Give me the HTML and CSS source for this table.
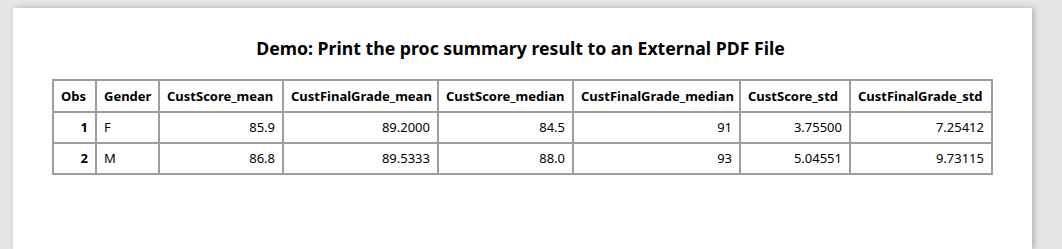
FILE: index.html
```html
<!DOCTYPE html>
<html>
<head>
<meta charset="utf-8">
<link rel="stylesheet" href="styles.css">
</head>
<body>
<div class="page">
  <h1 class="title">Demo: Print the proc summary result to an External PDF File</h1>
  <table class="data">
    <colgroup>
      <col class="c1"><col class="c2"><col class="c3"><col class="c4"><col class="c5"><col class="c6"><col class="c7"><col class="c8">
    </colgroup>
    <thead>
      <tr>
        <th class="left">Obs</th>
        <th class="left">Gender</th>
        <th class="left">CustScore_mean</th>
        <th class="left">CustFinalGrade_mean</th>
        <th class="left">CustScore_median</th>
        <th class="left">CustFinalGrade_median</th>
        <th class="left">CustScore_std</th>
        <th class="left">CustFinalGrade_std</th>
      </tr>
    </thead>
    <tbody>
      <tr>
        <th class="num">1</th><td>F</td><td class="num">85.9</td><td class="num">89.2000</td><td class="num">84.5</td><td class="num">91</td><td class="num">3.75500</td><td class="num">7.25412</td>
      </tr>
      <tr>
        <th class="num">2</th><td>M</td><td class="num">86.8</td><td class="num">89.5333</td><td class="num">88.0</td><td class="num">93</td><td class="num">5.04551</td><td class="num">9.73115</td>
      </tr>
    </tbody>
  </table>
</div>
</body>
</html>
```

FILE: styles.css
```css
html, body {
  margin: 0;
  padding: 0;
  background: #e6e6e6;
  height: 100%;
  overflow: hidden;
}
body {
  font-family: "Noto Sans", "Open Sans", sans-serif;
  color: #000;
}
.page {
  margin: 8px 0 0 13px;
  width: 1019px;
  height: 241px;
  background: #fff;
  box-shadow: 2px 0 6px rgba(0,0,0,0.25);
  padding-top: 29px;
  box-sizing: border-box;
}
.title {
  margin: 0;
  font-size: 17.7px;
  font-weight: 700;
  text-align: center;
  line-height: 22px;
  padding-right: 4px;
}
.data {
  margin: 20px 0 0 39px;
  border-collapse: collapse;
  table-layout: fixed;
  width: 939px;
  font-size: 13px;
  border: 2px solid #9d9d9d;
}
.c1 { width: 43px; }
.c2 { width: 63px; }
.c3 { width: 124px; }
.c4 { width: 155px; }
.c5 { width: 135px; }
.c6 { width: 167px; }
.c7 { width: 110px; }
.c8 { width: 142px; }
.data th, .data td {
  border: 2px solid #9d9d9d;
  padding: 6px 7px;
  line-height: 17px;
  white-space: nowrap;
}
.data thead th { height: 17px; padding-top: 7px; padding-bottom: 6px; }
.data th { font-weight: 700; }
.data .left { text-align: left; }
.data .num { text-align: right; }
.data td { text-align: left; font-weight: 400; }
.data td.num { text-align: right; }
```
